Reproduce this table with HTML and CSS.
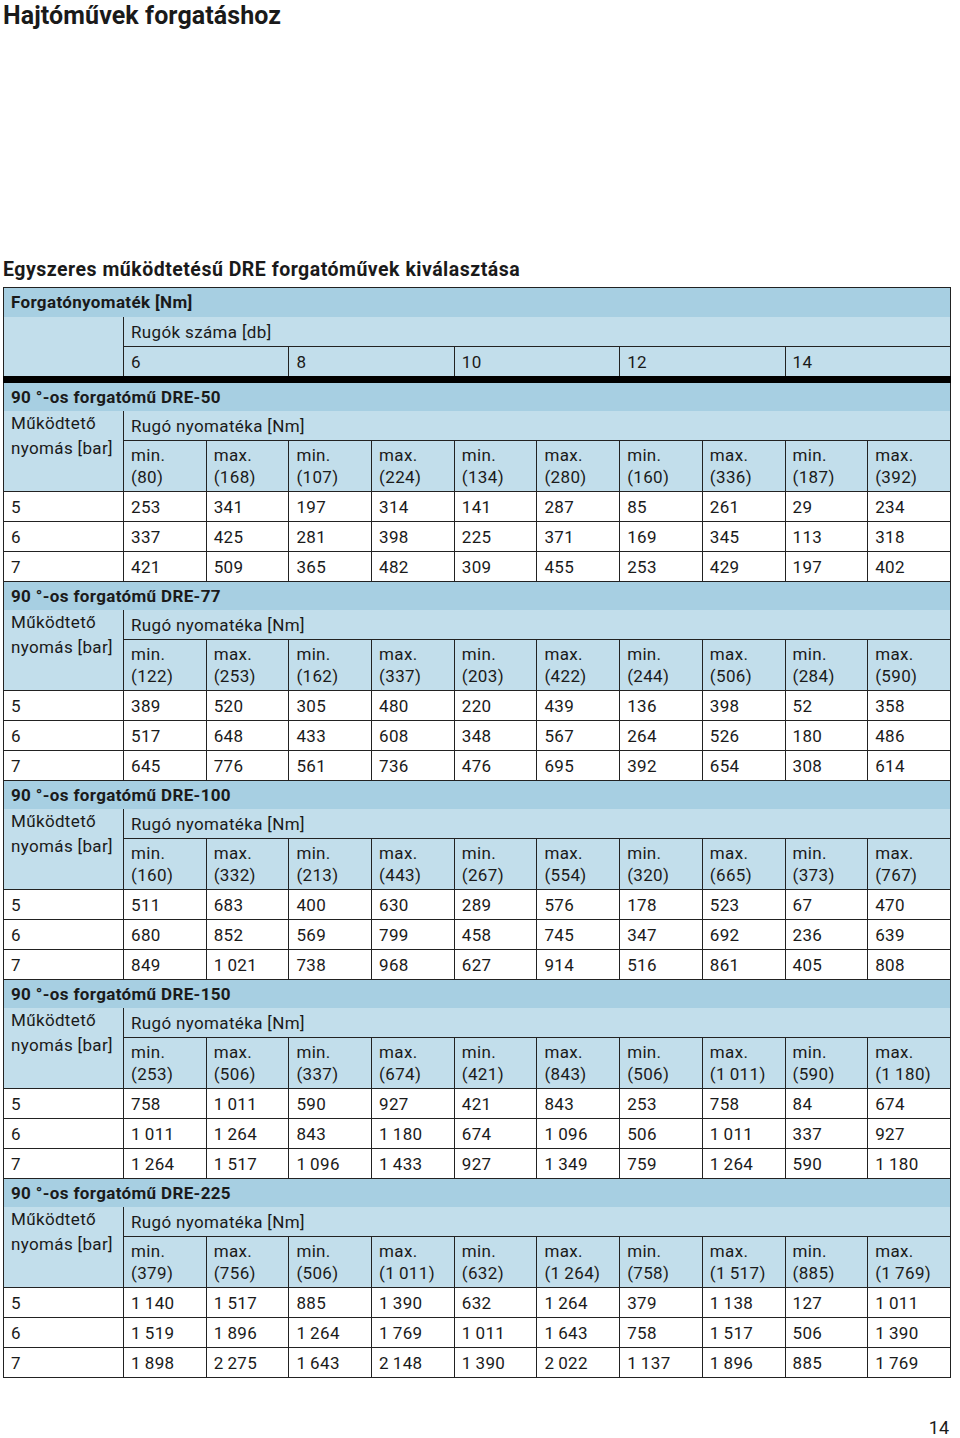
FILE: index.html
```html
<!DOCTYPE html>
<html lang="hu">
<head>
<meta charset="utf-8">
<title>Hajtóművek forgatáshoz</title>
<link rel="stylesheet" href="styles.css">
</head>
<body>
<h1 class="title">Hajtóművek forgatáshoz</h1>
<h2 class="subtitle">Egyszeres működtetésű DRE forgatóművek kiválasztása</h2>
<table class="grid">
<colgroup><col class="c-first"><col><col><col><col><col><col><col><col><col><col></colgroup>
<tbody>
<tr class="r-dark r-top"><td colspan="11" class="b">Forgatónyomaték [Nm]</td></tr>
<tr class="r-light"><td rowspan="2" class="blank"></td><td colspan="10">Rugók száma [db]</td></tr>
<tr class="r-light r-springs"><td colspan="2">6</td><td colspan="2">8</td><td colspan="2">10</td><td colspan="2">12</td><td colspan="2">14</td></tr>

<tr class="r-dark"><td colspan="11" class="b">90 °-os forgatómű DRE-50</td></tr>
<tr class="r-light"><td rowspan="2" class="press">Működtető<br>nyomás [bar]</td><td colspan="10">Rugó nyomatéka [Nm]</td></tr>
<tr class="r-light r-mm"><td>min.<br>(80)</td><td>max.<br>(168)</td><td>min.<br>(107)</td><td>max.<br>(224)</td><td>min.<br>(134)</td><td>max.<br>(280)</td><td>min.<br>(160)</td><td>max.<br>(336)</td><td>min.<br>(187)</td><td>max.<br>(392)</td></tr>
<tr class="r-data"><td>5</td><td>253</td><td>341</td><td>197</td><td>314</td><td>141</td><td>287</td><td>85</td><td>261</td><td>29</td><td>234</td></tr>
<tr class="r-data"><td>6</td><td>337</td><td>425</td><td>281</td><td>398</td><td>225</td><td>371</td><td>169</td><td>345</td><td>113</td><td>318</td></tr>
<tr class="r-data"><td>7</td><td>421</td><td>509</td><td>365</td><td>482</td><td>309</td><td>455</td><td>253</td><td>429</td><td>197</td><td>402</td></tr>

<tr class="r-dark"><td colspan="11" class="b">90 °-os forgatómű DRE-77</td></tr>
<tr class="r-light"><td rowspan="2" class="press">Működtető<br>nyomás [bar]</td><td colspan="10">Rugó nyomatéka [Nm]</td></tr>
<tr class="r-light r-mm"><td>min.<br>(122)</td><td>max.<br>(253)</td><td>min.<br>(162)</td><td>max.<br>(337)</td><td>min.<br>(203)</td><td>max.<br>(422)</td><td>min.<br>(244)</td><td>max.<br>(506)</td><td>min.<br>(284)</td><td>max.<br>(590)</td></tr>
<tr class="r-data"><td>5</td><td>389</td><td>520</td><td>305</td><td>480</td><td>220</td><td>439</td><td>136</td><td>398</td><td>52</td><td>358</td></tr>
<tr class="r-data"><td>6</td><td>517</td><td>648</td><td>433</td><td>608</td><td>348</td><td>567</td><td>264</td><td>526</td><td>180</td><td>486</td></tr>
<tr class="r-data"><td>7</td><td>645</td><td>776</td><td>561</td><td>736</td><td>476</td><td>695</td><td>392</td><td>654</td><td>308</td><td>614</td></tr>

<tr class="r-dark"><td colspan="11" class="b">90 °-os forgatómű DRE-100</td></tr>
<tr class="r-light"><td rowspan="2" class="press">Működtető<br>nyomás [bar]</td><td colspan="10">Rugó nyomatéka [Nm]</td></tr>
<tr class="r-light r-mm"><td>min.<br>(160)</td><td>max.<br>(332)</td><td>min.<br>(213)</td><td>max.<br>(443)</td><td>min.<br>(267)</td><td>max.<br>(554)</td><td>min.<br>(320)</td><td>max.<br>(665)</td><td>min.<br>(373)</td><td>max.<br>(767)</td></tr>
<tr class="r-data"><td>5</td><td>511</td><td>683</td><td>400</td><td>630</td><td>289</td><td>576</td><td>178</td><td>523</td><td>67</td><td>470</td></tr>
<tr class="r-data"><td>6</td><td>680</td><td>852</td><td>569</td><td>799</td><td>458</td><td>745</td><td>347</td><td>692</td><td>236</td><td>639</td></tr>
<tr class="r-data"><td>7</td><td>849</td><td>1&#8201;021</td><td>738</td><td>968</td><td>627</td><td>914</td><td>516</td><td>861</td><td>405</td><td>808</td></tr>

<tr class="r-dark"><td colspan="11" class="b">90 °-os forgatómű DRE-150</td></tr>
<tr class="r-light"><td rowspan="2" class="press">Működtető<br>nyomás [bar]</td><td colspan="10">Rugó nyomatéka [Nm]</td></tr>
<tr class="r-light r-mm"><td>min.<br>(253)</td><td>max.<br>(506)</td><td>min.<br>(337)</td><td>max.<br>(674)</td><td>min.<br>(421)</td><td>max.<br>(843)</td><td>min.<br>(506)</td><td>max.<br>(1&#8201;011)</td><td>min.<br>(590)</td><td>max.<br>(1&#8201;180)</td></tr>
<tr class="r-data"><td>5</td><td>758</td><td>1&#8201;011</td><td>590</td><td>927</td><td>421</td><td>843</td><td>253</td><td>758</td><td>84</td><td>674</td></tr>
<tr class="r-data"><td>6</td><td>1&#8201;011</td><td>1&#8201;264</td><td>843</td><td>1&#8201;180</td><td>674</td><td>1&#8201;096</td><td>506</td><td>1&#8201;011</td><td>337</td><td>927</td></tr>
<tr class="r-data"><td>7</td><td>1&#8201;264</td><td>1&#8201;517</td><td>1&#8201;096</td><td>1&#8201;433</td><td>927</td><td>1&#8201;349</td><td>759</td><td>1&#8201;264</td><td>590</td><td>1&#8201;180</td></tr>

<tr class="r-dark"><td colspan="11" class="b">90 °-os forgatómű DRE-225</td></tr>
<tr class="r-light"><td rowspan="2" class="press">Működtető<br>nyomás [bar]</td><td colspan="10">Rugó nyomatéka [Nm]</td></tr>
<tr class="r-light r-mm"><td>min.<br>(379)</td><td>max.<br>(756)</td><td>min.<br>(506)</td><td>max.<br>(1&#8201;011)</td><td>min.<br>(632)</td><td>max.<br>(1&#8201;264)</td><td>min.<br>(758)</td><td>max.<br>(1&#8201;517)</td><td>min.<br>(885)</td><td>max.<br>(1&#8201;769)</td></tr>
<tr class="r-data"><td>5</td><td>1&#8201;140</td><td>1&#8201;517</td><td>885</td><td>1&#8201;390</td><td>632</td><td>1&#8201;264</td><td>379</td><td>1&#8201;138</td><td>127</td><td>1&#8201;011</td></tr>
<tr class="r-data"><td>6</td><td>1&#8201;519</td><td>1&#8201;896</td><td>1&#8201;264</td><td>1&#8201;769</td><td>1&#8201;011</td><td>1&#8201;643</td><td>758</td><td>1&#8201;517</td><td>506</td><td>1&#8201;390</td></tr>
<tr class="r-data"><td>7</td><td>1&#8201;898</td><td>2&#8201;275</td><td>1&#8201;643</td><td>2&#8201;148</td><td>1&#8201;390</td><td>2&#8201;022</td><td>1&#8201;137</td><td>1&#8201;896</td><td>885</td><td>1&#8201;769</td></tr>
</tbody>
</table>
<footer class="pageno">14</footer>
</body>
</html>
```

FILE: styles.css
```css
html, body {
  margin: 0;
  padding: 0;
  background: #fff;
}
body {
  font-family: Roboto, "Liberation Sans", sans-serif;
  color: #1a1a1a;
  width: 960px;
  height: 1438px;
  position: relative;
}
.title {
  margin: 0;
  padding: 1px 0 0 3px;
  font-size: 25px;
  line-height: 30px;
  font-weight: 700;
  letter-spacing: 0.1px;
}
.subtitle {
  margin: 225px 0 0 3px;
  font-size: 19.5px;
  line-height: 28px;
  font-weight: 700;
  letter-spacing: 0.5px;
}
.grid {
  margin: 3px 0 0 3px;
  width: 948px;
  border-collapse: collapse;
  table-layout: fixed;
  font-size: 17px;
  letter-spacing: 0.35px;
}
.c-first { width: 120px; }
.grid td {
  border: 1px solid #222;
  padding: 0 7px;
  vertical-align: middle;
  white-space: nowrap;
  line-height: 22px;
}
.r-dark td {
  background: #a7cfe2;
  border-bottom-style: hidden;
  height: 27px;
  padding-bottom: 1px;
}
.r-top td { height: 27px; padding-bottom: 2px; }
.r-dark td.b { font-weight: 700; }
.r-light td {
  background: #c2deeb;
  height: 29px;
}
.r-springs td { border-bottom: 7px solid #000; }
.grid td.blank { border-bottom: 7px solid #000; }
.r-mm td {
  height: 47px;
  vertical-align: top;
  padding-top: 3px;
  padding-bottom: 0;
}
.grid td.press {
  vertical-align: top;
  line-height: 25px;
  padding-top: 0;
}
.r-data td {
  background: #fff;
  height: 29px;
}
.pageno {
  position: absolute;
  right: 11px;
  top: 1416px;
  font-size: 18px;
  line-height: 24px;
}
```
